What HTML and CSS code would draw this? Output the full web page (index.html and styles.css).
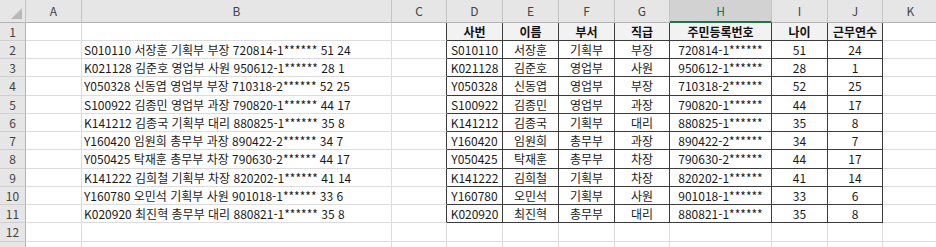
FILE: index.html
```html
<!DOCTYPE html>
<html lang="ko">
<head>
<meta charset="utf-8">
<title>Sheet</title>
<link rel="stylesheet" href="styles.css">
</head>
<body>
<div class="sheet">
  <div class="row hdr">
    <div class="c corner"><span class="tri"></span></div>
    <div class="c">A</div><div class="c">B</div><div class="c">C</div><div class="c">D</div><div class="c">E</div><div class="c">F</div><div class="c">G</div><div class="c sel">H</div><div class="c">I</div><div class="c">J</div><div class="c">K</div>
  </div>
  <div class="row r18">
    <div class="c rn">1</div><div class="c"></div><div class="c"></div><div class="c tl"></div>
    <div class="c t th">사번</div><div class="c t th">이름</div><div class="c t th">부서</div><div class="c t th">직급</div><div class="c t th">주민등록번호</div><div class="c t th">나이</div><div class="c t th">근무연수</div><div class="c"></div>
  </div>
  <div class="row r18">
    <div class="c rn">2</div><div class="c"></div><div class="c txt">S010110 서장훈 기획부 부장 720814-1****** 51 24</div><div class="c tl"></div>
    <div class="c t">S010110</div><div class="c t">서장훈</div><div class="c t">기획부</div><div class="c t">부장</div><div class="c t">720814-1******</div><div class="c t">51</div><div class="c t">24</div><div class="c"></div>
  </div>
  <div class="row r18">
    <div class="c rn">3</div><div class="c"></div><div class="c txt">K021128 김준호 영업부 사원 950612-1****** 28 1</div><div class="c tl"></div>
    <div class="c t">K021128</div><div class="c t">김준호</div><div class="c t">영업부</div><div class="c t">사원</div><div class="c t">950612-1******</div><div class="c t">28</div><div class="c t">1</div><div class="c"></div>
  </div>
  <div class="row r19">
    <div class="c rn">4</div><div class="c"></div><div class="c txt">Y050328 신동엽 영업부 부장 710318-2****** 52 25</div><div class="c tl"></div>
    <div class="c t">Y050328</div><div class="c t">신동엽</div><div class="c t">영업부</div><div class="c t">부장</div><div class="c t">710318-2******</div><div class="c t">52</div><div class="c t">25</div><div class="c"></div>
  </div>
  <div class="row r18">
    <div class="c rn">5</div><div class="c"></div><div class="c txt">S100922 김종민 영업부 과장 790820-1****** 44 17</div><div class="c tl"></div>
    <div class="c t">S100922</div><div class="c t">김종민</div><div class="c t">영업부</div><div class="c t">과장</div><div class="c t">790820-1******</div><div class="c t">44</div><div class="c t">17</div><div class="c"></div>
  </div>
  <div class="row r18">
    <div class="c rn">6</div><div class="c"></div><div class="c txt">K141212 김종국 기획부 대리 880825-1****** 35 8</div><div class="c tl"></div>
    <div class="c t">K141212</div><div class="c t">김종국</div><div class="c t">기획부</div><div class="c t">대리</div><div class="c t">880825-1******</div><div class="c t">35</div><div class="c t">8</div><div class="c"></div>
  </div>
  <div class="row r18">
    <div class="c rn">7</div><div class="c"></div><div class="c txt">Y160420 임원희 총무부 과장 890422-2****** 34 7</div><div class="c tl"></div>
    <div class="c t">Y160420</div><div class="c t">임원희</div><div class="c t">총무부</div><div class="c t">과장</div><div class="c t">890422-2******</div><div class="c t">34</div><div class="c t">7</div><div class="c"></div>
  </div>
  <div class="row r19">
    <div class="c rn">8</div><div class="c"></div><div class="c txt">Y050425 탁재훈 총무부 차장 790630-2****** 44 17</div><div class="c tl"></div>
    <div class="c t">Y050425</div><div class="c t">탁재훈</div><div class="c t">총무부</div><div class="c t">차장</div><div class="c t">790630-2******</div><div class="c t">44</div><div class="c t">17</div><div class="c"></div>
  </div>
  <div class="row r18">
    <div class="c rn">9</div><div class="c"></div><div class="c txt">K141222 김희철 기획부 차장 820202-1****** 41 14</div><div class="c tl"></div>
    <div class="c t">K141222</div><div class="c t">김희철</div><div class="c t">기획부</div><div class="c t">차장</div><div class="c t">820202-1******</div><div class="c t">41</div><div class="c t">14</div><div class="c"></div>
  </div>
  <div class="row r18">
    <div class="c rn">10</div><div class="c"></div><div class="c txt">Y160780 오민석 기획부 사원 901018-1****** 33 6</div><div class="c tl"></div>
    <div class="c t">Y160780</div><div class="c t">오민석</div><div class="c t">기획부</div><div class="c t">사원</div><div class="c t">901018-1******</div><div class="c t">33</div><div class="c t">6</div><div class="c"></div>
  </div>
  <div class="row r18">
    <div class="c rn">11</div><div class="c"></div><div class="c txt">K020920 최진혁 총무부 대리 880821-1****** 35 8</div><div class="c tl"></div>
    <div class="c t">K020920</div><div class="c t">최진혁</div><div class="c t">총무부</div><div class="c t">대리</div><div class="c t">880821-1******</div><div class="c t">35</div><div class="c t">8</div><div class="c"></div>
  </div>
  <div class="row r19">
    <div class="c rn">12</div><div class="c"></div><div class="c"></div><div class="c"></div><div class="c"></div><div class="c"></div><div class="c"></div><div class="c"></div><div class="c"></div><div class="c"></div><div class="c"></div><div class="c"></div>
  </div>
  <div class="row r19">
    <div class="c rn">13</div><div class="c"></div><div class="c"></div><div class="c"></div><div class="c"></div><div class="c"></div><div class="c"></div><div class="c"></div><div class="c"></div><div class="c"></div><div class="c"></div><div class="c"></div>
  </div>
</div>
</body>
</html>
```

FILE: styles.css
```css
* { box-sizing: border-box; }
html, body { margin: 0; padding: 0; background: #ffffff; overflow: hidden; }
body { width: 936px; height: 247px; }

.sheet {
  font-family: "Noto Sans CJK KR", "Noto Sans", sans-serif;
  font-size: 12px;
  color: #1a1a1a;
  width: 960px;
}

.row {
  display: grid;
  grid-template-columns: 26px 56px 310px 55px 56px 56px 56px 55px 102px 56px 55px 56px;
}
.r18 { height: 18px; }
.r19 { height: 19px; }

.c {
  border-right: 1px solid #dcdcdc;
  border-bottom: 1px solid #dcdcdc;
  display: flex;
  align-items: center;
  justify-content: center;
  white-space: nowrap;
  overflow: visible;
  line-height: 1;
}

.hdr { height: 23px; background: #e6e6e6; }
.hdr .c {
  border-right: 1px solid #c4c4c4;
  border-bottom: 1px solid #b4b4b4;
  color: #444;
  font-size: 12px;
}
.hdr .sel {
  background: #d2d2d2;
  color: #217346;
  border-bottom: 2px solid #217346;
}
.corner { position: relative; }
.tri {
  position: absolute;
  right: 3px;
  bottom: 3px;
  width: 0;
  height: 0;
  border-left: 11px solid transparent;
  border-bottom: 11px solid #b9b9b9;
}

.rn {
  background: #e6e6e6;
  color: #444;
  border-right: 1px solid #b4b4b4;
  border-bottom: 1px solid #cfcfcf;
  font-size: 12px;
}

.txt {
  justify-content: flex-start;
  padding-left: 2px;
}

.tl { border-right: 1px solid #3c3c3c; }
.t {
  border-right: 1px solid #3c3c3c;
  border-bottom: 1px solid #3c3c3c;
}
.th {
  background: #f2f2f2;
  font-weight: bold;
  font-size: 12px;
  color: #111;
}
```
